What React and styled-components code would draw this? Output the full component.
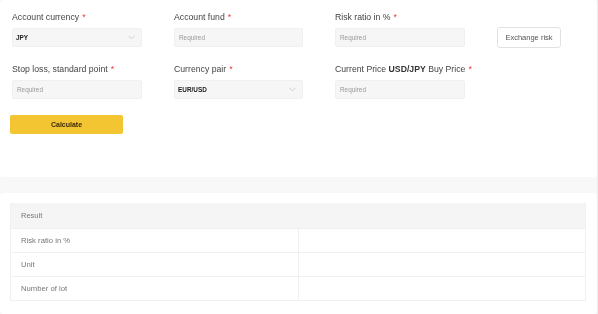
import React from "react";
import styled, { createGlobalStyle } from "styled-components";

const Global = createGlobalStyle`
  html, body { margin: 0; padding: 0; background: #f8f8f8; }
  body { font-family: "Liberation Sans", Arial, sans-serif; color: #333; }
`;

const Page = styled.div`
  width: 597px;
  border-right: 1px solid #ececec;
  display: flex;
  flex-direction: column;
  gap: 16px;
  will-change: transform;
`;

const Card = styled.section`
  background: #fff;
  border-radius: 4px;
  box-sizing: border-box;
  height: ${(p) => p.$h}px;
  padding: ${(p) => p.$pad};
`;

const Grid = styled.div`
  display: grid;
  grid-template-columns: 130px 129px 130px auto;
  column-gap: 32px;
  row-gap: 15px;
  margin-left: 2px;
`;

const Field = styled.div`
  display: flex;
  flex-direction: column;
  gap: 4px;
`;

const Label = styled.label`
  font-size: 8.7px;
  line-height: 14px;
  color: #444;
  white-space: nowrap;
  b { font-weight: 700; color: #333; }
`;

const Star = styled.span`
  color: #e8413c;
  margin-left: 3px;
`;

const Box = styled.div`
  height: 19px;
  box-sizing: border-box;
  background: #f6f6f6;
  border: 1px solid #f0f0f0;
  border-radius: 2px;
  display: flex;
  align-items: center;
  justify-content: space-between;
  padding: 0 6px 0 ${(p) => (p.$select ? 3 : 4)}px;
  font-size: 6.4px;
  color: ${(p) => (p.$select ? "#222" : "#999")};
  font-weight: ${(p) => (p.$select ? 700 : 400)};
`;

const Chevron = () => (
  <svg width="7" height="5" viewBox="0 0 7 5">
    <path d="M0.5 0.8 L3.5 3.8 L6.5 0.8" fill="none" stroke="#c4c4c4" strokeWidth="0.8" />
  </svg>
);

const SideCell = styled.div`
  align-self: end;
`;

const GhostButton = styled.button`
  height: 21px;
  width: 64px;
  margin-bottom: -1px;
  background: #fff;
  border: 1px solid #e2e2e2;
  border-radius: 3px;
  font-family: inherit;
  font-size: 7.5px;
  color: #555;
  padding: 0;
`;

const Primary = styled.button`
  margin-top: 16px;
  width: 113px;
  height: 19px;
  background: #f3c532;
  border: none;
  border-radius: 2px;
  font-family: inherit;
  font-weight: 700;
  font-size: 7px;
  color: #3b2a08;
  padding: 0;
  display: block;
`;

const Table = styled.div`
  border: 1px solid #f0f0f0;
  border-top: none;
`;

const Head = styled.div`
  height: 25px;
  background: #f5f5f5;
  display: flex;
  align-items: center;
  padding-left: 10px;
  font-size: 7.5px;
  color: #777;
`;

const Row = styled.div`
  display: grid;
  grid-template-columns: 287px 1fr;
  height: 24px;
  border-top: 1px solid #f0f0f0;
  box-sizing: border-box;
`;

const Cell = styled.div`
  display: flex;
  align-items: center;
  padding-left: 10px;
  font-size: 7.7px;
  color: #777;
  & + & { border-left: 1px solid #f0f0f0; }
`;

const fields = [
  { label: "Account currency", select: "JPY" },
  { label: "Account fund" },
  { label: "Risk ratio in %" },
  { label: "Stop loss, standard point" },
  { label: "Currency pair", select: "EUR/USD" },
  {
    label: (
      <>
        Current Price <b>USD/JPY</b> Buy Price
      </>
    ),
  },
];

function FieldView({ f }) {
  return (
    <Field>
      <Label>
        {f.label}
        <Star>*</Star>
      </Label>
      <Box $select={!!f.select}>
        {f.select ? (
          <>
            <span>{f.select}</span>
            <Chevron />
          </>
        ) : (
          <span>Required</span>
        )}
      </Box>
    </Field>
  );
}

export default function App() {
  const rows = ["Risk ratio in %", "Unit", "Number of lot"];
  return (
    <>
      <Global />
      <Page>
        <Card $h={177} $pad="10px 10px 0 10px">
          <Grid>
            <FieldView f={fields[0]} />
            <FieldView f={fields[1]} />
            <FieldView f={fields[2]} />
            <SideCell>
              <GhostButton>Exchange risk</GhostButton>
            </SideCell>
            <FieldView f={fields[3]} />
            <FieldView f={fields[4]} />
            <FieldView f={fields[5]} />
          </Grid>
          <Primary>Calculate</Primary>
        </Card>
        <Card $h={121} $pad="10px 11px 0 10px">
          <Table>
            <Head>Result</Head>
            {rows.map((r) => (
              <Row key={r}>
                <Cell>{r}</Cell>
                <Cell />
              </Row>
            ))}
          </Table>
        </Card>
      </Page>
    </>
  );
}
